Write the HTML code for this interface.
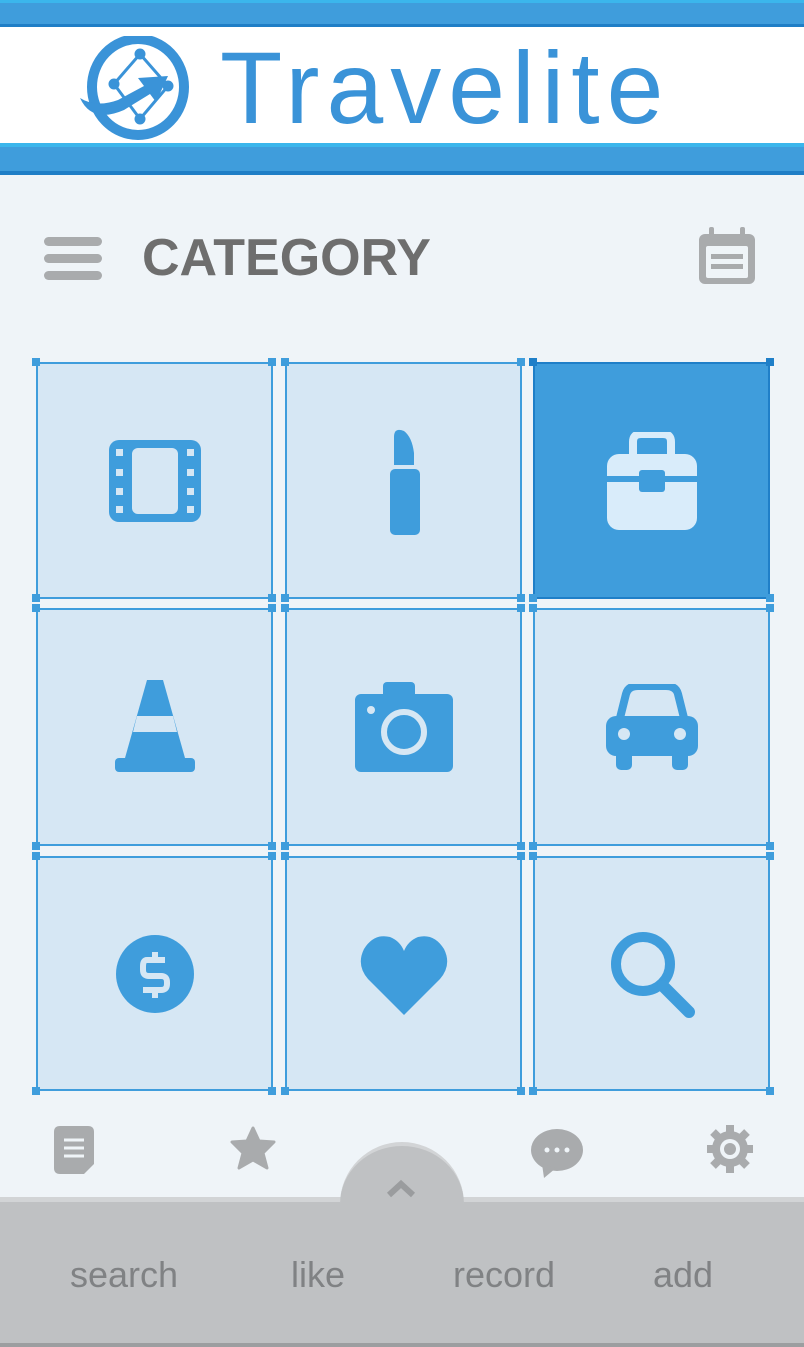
<!DOCTYPE html>
<html><head><meta charset="utf-8"><style>
*{margin:0;padding:0;box-sizing:border-box}
body{width:804px;height:1347px;overflow:hidden;background:#eff4f8;font-family:"Liberation Sans",sans-serif;position:relative}
.abs{position:absolute}
.cell{position:absolute;background:#d6e7f4;border:2px solid #3f9ddc}
.cell.on{background:#3f9ddc;border-color:#1f7fc8}
.h{position:absolute;width:8px;height:8px;background:#3f9ddc}
.cell svg{position:absolute;left:50%;top:50%;transform:translate(-50%,-50%)}
.lab{position:absolute;top:1254px;font-size:36px;color:#808284;letter-spacing:0px}
</style></head><body>
<div class="abs" style="left:0;top:0;width:804px;height:27px;background:#3f9ddc;border-top:3px solid #3bb6ec;border-bottom:3px solid #1f7ec6"></div>
<div class="abs" style="left:0;top:27px;width:804px;height:116px;background:#fff"></div>
<div class="abs" style="left:0;top:143px;width:804px;height:32px;background:#3f9ddc;border-top:4px solid #3bb6ec;border-bottom:4px solid #1f7ec6"></div>
<svg class="abs" style="left:72px;top:36px" width="120" height="104" viewBox="0 0 120 104">
<ellipse cx="66" cy="51" rx="46" ry="48" fill="none" stroke="#3a93d8" stroke-width="10"/>
<g stroke="#3a93d8" stroke-width="3" fill="#3a93d8"><line x1="68" y1="18" x2="42" y2="48"/><line x1="68" y1="18" x2="96" y2="50"/><line x1="96" y1="50" x2="68" y2="83"/><line x1="42" y1="48" x2="68" y2="83"/>
<circle cx="68" cy="18" r="4"/><circle cx="42" cy="48" r="4"/><circle cx="96" cy="50" r="4"/><circle cx="68" cy="83" r="4"/></g>
<path d="M8 62 Q20 88 52 74 L78 58 L84 66 L96 40 L66 42 L72 50 L46 64 Q24 72 8 62Z" fill="#3a93d8"/>
</svg>
<div class="abs" style="left:220px;top:28px;font-size:102px;color:#3a93d8;letter-spacing:7px;line-height:120px">Travelite</div>
<div class="abs" style="left:44px;top:237px;width:58px;height:9px;border-radius:5px;background:#a9abad"></div>
<div class="abs" style="left:44px;top:254px;width:58px;height:9px;border-radius:5px;background:#a9abad"></div>
<div class="abs" style="left:44px;top:271px;width:58px;height:9px;border-radius:5px;background:#a9abad"></div>
<div class="abs" style="left:142px;top:228px;font-size:52px;font-weight:bold;color:#6e6e6e;letter-spacing:0px;line-height:60px">CATEGORY</div>
<svg class="abs" style="left:697px;top:226px" width="60" height="60" viewBox="0 0 60 60"><rect x="2" y="8" width="56" height="50" rx="6" fill="#a9abad"/><rect x="9" y="20" width="42" height="32" rx="2" fill="#eff4f8"/><rect x="14" y="28" width="32" height="5" fill="#a9abad"/><rect x="14" y="38" width="32" height="5" fill="#a9abad"/><rect x="12" y="1" width="5" height="14" rx="2" fill="#a9abad"/><rect x="43" y="1" width="5" height="14" rx="2" fill="#a9abad"/></svg>

<div class="cell" style="left:36px;top:362px;width:237px;height:237px"><svg width="92" height="82" viewBox="0 0 92 82"><rect width="92" height="82" rx="10" fill="#3f9ddc"/><rect x="23" y="8" width="46" height="66" rx="6" fill="#d6e7f4"/><g fill="#d6e7f4"><rect x="7" y="9" width="7" height="7"/><rect x="7" y="29" width="7" height="7"/><rect x="7" y="48" width="7" height="7"/><rect x="7" y="66" width="7" height="7"/><rect x="78" y="9" width="7" height="7"/><rect x="78" y="29" width="7" height="7"/><rect x="78" y="48" width="7" height="7"/><rect x="78" y="66" width="7" height="7"/></g></svg></div>
<div class="cell" style="left:285px;top:362px;width:237px;height:237px"><svg width="36" height="108" viewBox="0 0 36 108"><path d="M8 38 L8 10 Q8 0 18 4 Q26 10 28 26 L28 38Z" fill="#3f9ddc"/><rect x="4" y="42" width="30" height="66" rx="5" fill="#3f9ddc"/></svg></div>
<div class="cell on" style="left:533px;top:362px;width:237px;height:237px"><svg width="90" height="98" viewBox="0 0 90 98"><path d="M26 22 V10 Q26 2 34 2 H56 Q64 2 64 10 V22" fill="none" stroke="#d9ecfa" stroke-width="8"/><rect x="0" y="22" width="90" height="76" rx="12" fill="#d9ecfa"/><rect x="0" y="44" width="90" height="6" fill="#3f9ddc"/><rect x="32" y="38" width="26" height="22" rx="3" fill="#3f9ddc"/></svg></div>

<div class="cell" style="left:36px;top:608px;width:237px;height:238px"><svg width="80" height="94" viewBox="0 0 80 94"><path d="M32 0 H48 L70 78 H10Z" fill="#3f9ddc"/><rect x="0" y="78" width="80" height="14" rx="4" fill="#3f9ddc"/><path d="M22 36 H58 L62 52 H18Z" fill="#d6e7f4"/></svg></div>
<div class="cell" style="left:285px;top:608px;width:237px;height:238px"><svg width="98" height="90" viewBox="0 0 98 90"><rect x="28" y="0" width="32" height="16" rx="4" fill="#3f9ddc"/><rect x="0" y="12" width="98" height="78" rx="6" fill="#3f9ddc"/><circle cx="49" cy="50" r="20" fill="none" stroke="#d6e7f4" stroke-width="6"/><circle cx="16" cy="28" r="4" fill="#d6e7f4"/></svg></div>
<div class="cell" style="left:533px;top:608px;width:237px;height:238px"><svg width="92" height="86" viewBox="0 0 92 86"><path d="M14 34 L20 10 Q22 2 32 2 H60 Q70 2 72 10 L78 34" fill="none" stroke="#3f9ddc" stroke-width="8"/><rect x="0" y="32" width="92" height="40" rx="10" fill="#3f9ddc"/><rect x="10" y="66" width="16" height="20" rx="5" fill="#3f9ddc"/><rect x="66" y="66" width="16" height="20" rx="5" fill="#3f9ddc"/><circle cx="18" cy="50" r="6" fill="#d6e7f4"/><circle cx="74" cy="50" r="6" fill="#d6e7f4"/></svg></div>

<div class="cell" style="left:36px;top:856px;width:237px;height:235px"><svg width="80" height="80" viewBox="0 0 80 80"><circle cx="40" cy="40" r="39" fill="#3f9ddc"/><path d="M50 26 H32 Q28 26 28 32 V36 Q28 42 34 42 H46 Q52 42 52 48 V50 Q52 56 46 56 H28 M40 18 V26 M40 56 V64" fill="none" stroke="#d6e7f4" stroke-width="6"/></svg></div>
<div class="cell" style="left:285px;top:856px;width:237px;height:235px"><svg width="88" height="82" viewBox="0 0 88 82"><path d="M44 82 L8 46 Q-4 32 4 16 Q14 0 30 4 Q40 8 44 18 Q48 8 58 4 Q74 0 84 16 Q92 32 80 46Z" fill="#3f9ddc"/></svg></div>
<div class="cell" style="left:533px;top:856px;width:237px;height:235px"><svg width="86" height="88" viewBox="0 0 86 88"><circle cx="34" cy="34" r="27" fill="none" stroke="#3f9ddc" stroke-width="10"/><line x1="54" y1="56" x2="80" y2="82" stroke="#3f9ddc" stroke-width="12" stroke-linecap="round"/></svg></div>

<div class="h" style="left:32px;top:358px"></div><div class="h" style="left:268px;top:358px"></div><div class="h" style="left:281px;top:358px"></div><div class="h" style="left:517px;top:358px"></div><div class="h" style="left:529px;top:358px;background:#1f7fc8"></div><div class="h" style="left:766px;top:358px;background:#1f7fc8"></div>
<div class="h" style="left:32px;top:594px"></div><div class="h" style="left:268px;top:594px"></div><div class="h" style="left:281px;top:594px"></div><div class="h" style="left:517px;top:594px"></div><div class="h" style="left:529px;top:594px"></div><div class="h" style="left:766px;top:594px"></div>
<div class="h" style="left:32px;top:604px"></div><div class="h" style="left:268px;top:604px"></div><div class="h" style="left:281px;top:604px"></div><div class="h" style="left:517px;top:604px"></div><div class="h" style="left:529px;top:604px"></div><div class="h" style="left:766px;top:604px"></div>
<div class="h" style="left:32px;top:842px"></div><div class="h" style="left:268px;top:842px"></div><div class="h" style="left:281px;top:842px"></div><div class="h" style="left:517px;top:842px"></div><div class="h" style="left:529px;top:842px"></div><div class="h" style="left:766px;top:842px"></div>
<div class="h" style="left:32px;top:852px"></div><div class="h" style="left:268px;top:852px"></div><div class="h" style="left:281px;top:852px"></div><div class="h" style="left:517px;top:852px"></div><div class="h" style="left:529px;top:852px"></div><div class="h" style="left:766px;top:852px"></div>
<div class="h" style="left:32px;top:1087px"></div><div class="h" style="left:268px;top:1087px"></div><div class="h" style="left:281px;top:1087px"></div><div class="h" style="left:517px;top:1087px"></div><div class="h" style="left:529px;top:1087px"></div><div class="h" style="left:766px;top:1087px"></div>

<svg class="abs" style="left:54px;top:1126px" width="44" height="50" viewBox="0 0 44 50"><path d="M6 0 H34 Q40 0 40 6 V38 L30 48 H6 Q0 48 0 42 V6 Q0 0 6 0Z" fill="#a9abad"/><g stroke="#eff4f8" stroke-width="3"><line x1="10" y1="14" x2="30" y2="14"/><line x1="10" y1="22" x2="30" y2="22"/><line x1="10" y1="30" x2="30" y2="30"/></g></svg>
<svg class="abs" style="left:230px;top:1126px" width="46" height="44" viewBox="0 0 46 44"><path d="M23 2 L29 15 L44 16 L33 27 L37 42 L23 34 L9 42 L13 27 L2 16 L17 15Z" fill="#a9abad" stroke="#a9abad" stroke-width="3" stroke-linejoin="round"/></svg>
<svg class="abs" style="left:530px;top:1128px" width="54" height="50" viewBox="0 0 54 50"><ellipse cx="27" cy="22" rx="26" ry="21" fill="#a9abad"/><path d="M12 36 L14 50 L26 40Z" fill="#a9abad"/><circle cx="17" cy="22" r="2.5" fill="#eff4f8"/><circle cx="27" cy="22" r="2.5" fill="#eff4f8"/><circle cx="37" cy="22" r="2.5" fill="#eff4f8"/></svg>
<svg class="abs" style="left:704px;top:1122px" width="52" height="54" viewBox="0 0 52 54"><circle cx="26" cy="27" r="18" fill="#a9abad"/><g stroke="#a9abad" stroke-width="8"><line x1="26" y1="3" x2="26" y2="51"/><line x1="3" y1="27" x2="49" y2="27"/><line x1="9" y1="10" x2="43" y2="44"/><line x1="43" y1="10" x2="9" y2="44"/></g><circle cx="26" cy="27" r="10" fill="#eff4f8"/><circle cx="26" cy="27" r="6" fill="#a9abad"/></svg>

<div class="abs" style="left:0;top:1197px;width:804px;height:150px;background:#bfc1c3;border-top:5px solid #d2d4d6;border-bottom:4px solid #9c9ea0"></div>
<div class="abs" style="left:340px;top:1142px;width:124px;height:120px;border-radius:62px 62px 0 0;background:#bfc1c3;border-top:4px solid #d2d4d6"></div>
<svg class="abs" style="left:386px;top:1178px" width="30" height="20" viewBox="0 0 30 20"><path d="M3 17 L15 6 L27 17" fill="none" stroke="#9a9c9e" stroke-width="6"/></svg>
<div class="lab" style="left:70px">search</div>
<div class="lab" style="left:291px">like</div>
<div class="lab" style="left:453px">record</div>
<div class="lab" style="left:653px">add</div>
</body></html>
